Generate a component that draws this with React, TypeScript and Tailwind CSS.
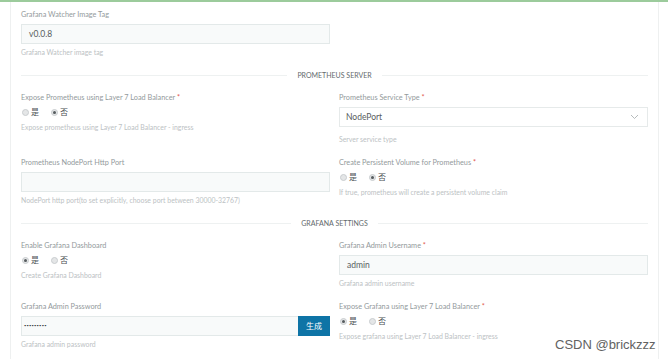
import React from "react";

const FONT = "font-['Lato','Noto_Sans_CJK_SC',sans-serif]";

function Label({ text, required }: { text: string; required?: boolean }) {
  return (
    <div className="h-[12px] text-[7.3px] leading-[12px] text-[#939a9c]">
      {text}
      {required && <span className="text-[#e25a4e]"> *</span>}
    </div>
  );
}

function Help({ text, className = "mt-[2px]" }: { text: string; className?: string }) {
  return <div className={`${className} h-[12px] text-[6.9px] leading-[12px] text-[#bcc2c4]`}>{text}</div>;
}

function TextField({ label, value, help, required }: { label: string; value: string; help: string; required?: boolean }) {
  return (
    <div>
      <Label text={label} required={required} />
      <div className="mt-[3px] flex h-[20px] items-center border border-[#e3e9e9] bg-[#f8fafa] px-[7px] text-[8.5px] text-[#575d60]">
        {value}
      </div>
      <Help text={help} />
    </div>
  );
}

function Radio({ checked, text }: { checked: boolean; text: string }) {
  return (
    <div className="flex items-center gap-[2px]">
      <span className="flex h-[7px] w-[7px] items-center justify-center rounded-full border border-[#c9cdcf] bg-[#e4e6e7]">
        {checked && <span className="h-[3px] w-[3px] rounded-full bg-[#555b5e]" />}
      </span>
      <span className="text-[8px] leading-[12px] text-[#4a5053]">{text}</span>
    </div>
  );
}

function RadioField({ label, yes, help, required }: { label: string; yes: boolean; help: string; required?: boolean }) {
  return (
    <div>
      <Label text={label} required={required} />
      <div className="mt-[2px] flex h-[12px] items-center gap-[12px] pl-px">
        <Radio checked={yes} text="是" />
        <Radio checked={!yes} text="否" />
      </div>
      <Help text={help} className="mt-[3px]" />
    </div>
  );
}

function Divider({ text }: { text: string }) {
  return (
    <div className="my-[11px] flex h-[12px] items-center gap-[10px]">
      <div className="h-px flex-1 bg-[#eef1f1]" />
      <div className="text-[7px] uppercase leading-[12px] text-[#646a6d]">{text}</div>
      <div className="h-px flex-1 bg-[#eef1f1]" />
    </div>
  );
}

export default function App() {
  return (
    <div className={`relative h-[359px] w-[668px] overflow-hidden bg-white ${FONT}`}>
      <div className="h-[2px] w-full bg-[#9ccb9c]" />
      <div className="ml-[10px] h-[357px] w-[649px] border-x border-[#eef0f0] px-[10px] pt-[7px]">
        <div className="grid grid-cols-2 gap-x-[9px]">
          <TextField label="Grafana Watcher Image Tag" value="v0.0.8" help="Grafana Watcher image tag" />
        </div>

        <Divider text="Prometheus Server" />

        <div className="grid grid-cols-2 gap-x-[9px] gap-y-[12px]">
          <RadioField
            label="Expose Prometheus using Layer 7 Load Balancer"
            required
            yes={false}
            help="Expose prometheus using Layer 7 Load Balancer - ingress"
          />
          <div>
            <Label text="Prometheus Service Type" required />
            <div className="mt-[3px] flex h-[20px] items-center justify-between border border-[#e6eaea] bg-white pl-[6px] pr-[8px] text-[8.5px] text-[#575d60]">
              NodePort
              <svg width="9" height="6" viewBox="0 0 9 6" fill="none">
                <polyline points="1,1 4.5,4.5 8,1" stroke="#a3a9ab" strokeWidth="0.8" />
              </svg>
            </div>
            <Help text="Server service type" className="mt-[6px]" />
          </div>

          <TextField
            label="Prometheus NodePort Http Port"
            value=""
            help="NodePort http port(to set explicitly, choose port between 30000-32767)"
          />
          <RadioField
            label="Create Persistent Volume for Prometheus"
            required
            yes={false}
            help="If true, prometheus will create a persistent volume claim"
          />
        </div>

        <Divider text="Grafana Settings" />

        <div className="grid grid-cols-2 gap-x-[9px] gap-y-[12px]">
          <RadioField label="Enable Grafana Dashboard" yes={true} help="Create Grafana Dashboard" />
          <TextField label="Grafana Admin Username" required value="admin" help="Grafana admin username" />

          <div>
            <Label text="Grafana Admin Password" />
            <div className="mt-[3px] flex h-[20px]">
              <div className="flex flex-1 items-center border border-r-0 border-[#e3e9e9] bg-[#f8fafa] px-[2px] text-[4px] tracking-[0.2px] text-[#3d4446]">
                •••••••••
              </div>
              <button className="w-[32px] bg-[#0e74a6] text-[8px] text-white">生成</button>
            </div>
            <Help text="Grafana admin password" />
          </div>
          <RadioField
            label="Expose Grafana using Layer 7 Load Balancer"
            required
            yes={true}
            help="Expose grafana using Layer 7 Load Balancer - ingress"
          />
        </div>
      </div>

      <div className="absolute left-[555px] top-[337px] font-['Liberation_Sans',sans-serif] text-[13px] leading-[16px] text-[#626262]">
        CSDN @brickzzz
      </div>
    </div>
  );
}
